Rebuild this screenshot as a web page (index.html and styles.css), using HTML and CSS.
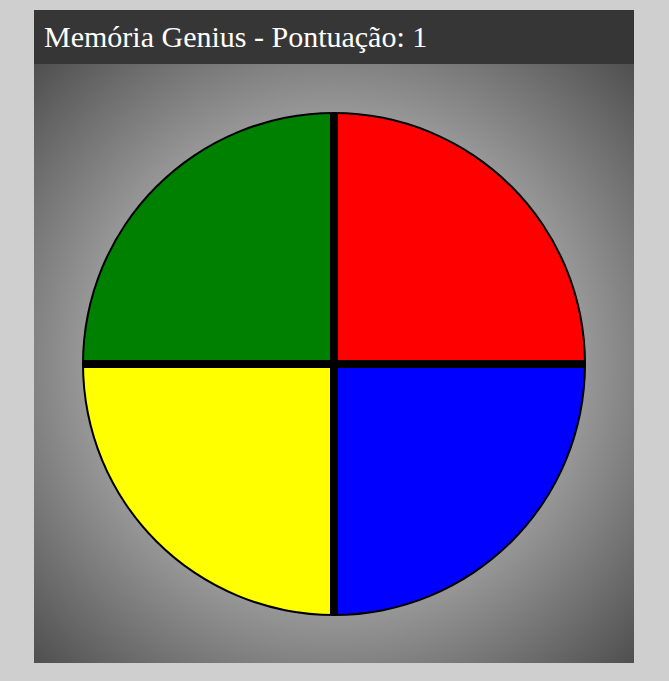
FILE: index.html
```html
<!DOCTYPE html>
<html lang="pt">
<head>
<meta charset="utf-8">
<title>Memória Genius</title>
<link rel="stylesheet" href="styles.css">
</head>
<body>
<div class="app">
  <header class="bar">Memória Genius - Pontuação: 1</header>
  <main class="board">
    <div class="ring">
      <div class="disc">
        <div class="pad green"></div>
        <div class="pad red"></div>
        <div class="pad yellow"></div>
        <div class="pad blue"></div>
      </div>
    </div>
  </main>
</div>
</body>
</html>
```
FILE: styles.css
```css
html, body {
  margin: 0;
  padding: 0;
}
body {
  background: #cfcfcf;
  font-family: "Liberation Serif", "Times New Roman", serif;
}
.app {
  width: 600px;
  margin: 10px 0 0 34px;
}
.bar {
  background: #363636;
  color: #fff;
  height: 54px;
  box-sizing: border-box;
  padding: 11px 10px 0;
  font-size: 30px;
  line-height: 32px;
}
.board {
  height: 599px;
  background: radial-gradient(#ffffff, #4f4f4f);
  display: flex;
  align-items: center;
  justify-content: center;
}
.ring {
  width: 504px;
  height: 504px;
  border-radius: 50%;
  background: #000;
  padding: 2px;
  box-sizing: border-box;
  margin-top: 1px;
}
.disc {
  width: 500px;
  height: 500px;
  border-radius: 50%;
  overflow: hidden;
  display: grid;
  grid-template-columns: 246px 246px;
  grid-template-rows: 246px 246px;
  gap: 8px;
  background: #000;
}
.green { background: #008000; }
.red { background: #ff0000; }
.yellow { background: #ffff00; }
.blue { background: #0000ff; }
```
